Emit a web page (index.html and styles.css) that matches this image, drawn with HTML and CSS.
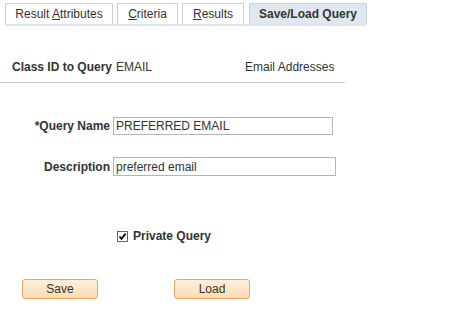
FILE: index.html
```html
<!DOCTYPE html>
<html lang="en">
<head>
    <meta charset="UTF-8">
    <title>Save/Load Query</title>
    <link rel="stylesheet" href="styles.css">
</head>
<body>
    <div class="tabs">
        <div class="tab tab-attr">Result <u>A</u>ttributes</div>
        <div class="tab tab-crit"><u>C</u>riteria</div>
        <div class="tab tab-res"><u>R</u>esults</div>
        <div class="tab tab-active">Save/Load Query</div>
    </div>

    <div class="class-row">
        <span class="label">Class ID to Query</span>
        <span class="class-id">EMAIL</span>
        <span class="class-desc">Email Addresses</span>
    </div>

    <div class="form-row row-name">
        <label class="label field-label" for="query-name">*Query Name</label>
        <input type="text" id="query-name" class="field name-field" value="PREFERRED EMAIL">
    </div>
    <div class="form-row row-desc">
        <label class="label field-label" for="query-desc">Description</label>
        <input type="text" id="query-desc" class="field desc-field" value="preferred email">
    </div>

    <div class="private-row">
        <span class="check">
            <svg width="11" height="11" viewBox="0 0 11 11">
                <rect x="0.5" y="0.5" width="10" height="10" fill="#fff" stroke="#666"/>
                <path d="M2.5 5.5 L4.5 7.8 L8.6 2.6" fill="none" stroke="#000" stroke-width="1.8"/>
            </svg>
        </span>
        <span class="label">Private Query</span>
    </div>

    <div class="buttons">
        <button class="btn btn-save">Save</button>
        <button class="btn btn-load">Load</button>
    </div>
</body>
</html>
```
FILE: styles.css
```css
body {
    margin: 0;
    font-family: Arial, "Liberation Sans", sans-serif;
    font-size: 12px;
    color: #333;
    background: #fff;
}
.tabs {
    display: flex;
    gap: 4px;
    margin: 3px 0 0 5px;
    width: 362px;
    border-bottom: 2px solid #dde6ef;
}
.tab {
    height: 20px;
    line-height: 21px;
    border: 1px solid #cfcfcf;
    border-bottom: none;
    text-align: center;
    font-size: 12px;
    color: #333;
    background: #fff;
}
.tab u {
    text-decoration: underline;
}
.tab-attr {
    width: 106px;
}
.tab-crit {
    width: 59px;
}
.tab-res {
    width: 60px;
}
.tab-active {
    width: 116px;
    margin-left: 1px;
    background: #dfe8f1;
    border-color: #c9d2dc;
    font-weight: bold;
}
.label {
    font-weight: bold;
    color: #333;
}
.class-row {
    display: flex;
    align-items: center;
    margin-top: 34px;
    padding: 0 0 8px 12px;
    width: 333px;
    border-bottom: 1px solid #c8c8c8;
}
.class-id {
    margin-left: 4px;
    width: 129px;
}
.form-row {
    display: flex;
    align-items: center;
}
.row-name {
    margin-top: 34px;
}
.row-desc {
    margin-top: 22px;
}
.field-label {
    width: 110px;
    text-align: right;
    margin-right: 3px;
}
.field {
    height: 18px;
    box-sizing: border-box;
    border: 1px solid #b5b5b5;
    padding: 0 2px;
    font-family: Arial, "Liberation Sans", sans-serif;
    font-size: 12px;
    color: #333;
}
.name-field {
    width: 220px;
}
.desc-field {
    width: 223px;
    height: 19px;
}
.private-row {
    display: flex;
    align-items: center;
    gap: 5px;
    margin: 53px 0 0 117px;
}
.check {
    display: flex;
}
.buttons {
    display: flex;
    gap: 76px;
    margin: 36px 0 0 22px;
}
.btn {
    width: 76px;
    height: 20px;
    border: 1px solid #e0a868;
    border-radius: 3px;
    background: linear-gradient(#fdf0dc, #fbdcb0);
    font-family: Arial, "Liberation Sans", sans-serif;
    font-size: 12px;
    color: #333;
    padding: 0;
}
```
